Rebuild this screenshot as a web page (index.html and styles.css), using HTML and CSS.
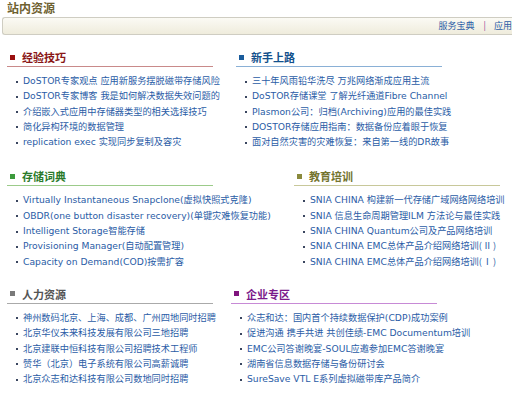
FILE: index.html
```html
<!DOCTYPE html>
<html lang="zh-CN">
<head>
  <meta charset="UTF-8" />
  <title>站内资源</title>
  <link rel="stylesheet" href="styles.css">
</head>
<body>

  <div class="title">站内资源</div>

  <div class="bar">
    <a href="#">服务宝典</a><span class="sep">|</span><a href="#">应用</a>
  </div>

  <div class="row first">
    <div class="box red">
      <h3>经验技巧</h3>
      <ul>
        <li><a href="#">DoSTOR专家观点 应用新服务摆脱磁带存储风险</a></li>
        <li><a href="#">DoSTOR专家博客 我是如何解决数据失效问题的</a></li>
        <li><a href="#">介绍嵌入式应用中存储器类型的相关选择技巧</a></li>
        <li><a href="#">简化异构环境的数据管理</a></li>
        <li><a href="#">replication exec 实现同步复制及容灾</a></li>
      </ul>
    </div>
    <div class="box blue shift-a">
      <h3>新手上路</h3>
      <ul>
        <li><a href="#">三十年风雨铅华洗尽 万兆网络渐成应用主流</a></li>
        <li><a href="#">DoSTOR存储课堂 了解光纤通道Fibre Channel</a></li>
        <li><a href="#">Plasmon公司：归档(Archiving)应用的最佳实践</a></li>
        <li><a href="#">DOSTOR存储应用指南：数据备份应着眼于恢复</a></li>
        <li><a href="#">面对自然灾害的灾难恢复：来自第一线的DR故事</a></li>
      </ul>
    </div>
  </div>

  <div class="row second">
    <div class="box green">
      <h3>存储词典</h3>
      <ul>
        <li><a href="#">Virtually Instantaneous Snapclone(虚拟快照式克隆)</a></li>
        <li><a href="#">OBDR(one button disaster recovery)(单键灾难恢复功能)</a></li>
        <li><a href="#">Intelligent Storage智能存储</a></li>
        <li><a href="#">Provisioning Manager(自动配置管理)</a></li>
        <li><a href="#">Capacity on Demand(COD)按需扩容</a></li>
      </ul>
    </div>
    <div class="box olive shift-b">
      <h3>教育培训</h3>
      <ul>
        <li><a href="#">SNIA CHINA 构建新一代存储广域网络网络培训</a></li>
        <li><a href="#">SNIA 信息生命周期管理ILM 方法论与最佳实践</a></li>
        <li><a href="#">SNIA CHINA Quantum公司及产品网络培训</a></li>
        <li><a href="#">SNIA CHINA EMC总体产品介绍网络培训<span class="cjk">(Ⅱ)</span></a></li>
        <li><a href="#">SNIA CHINA EMC总体产品介绍网络培训<span class="cjk">(Ⅰ)</span></a></li>
      </ul>
    </div>
  </div>

  <div class="row third">
    <div class="box gray">
      <h3>人力资源</h3>
      <ul>
        <li><a href="#">神州数码北京、上海、成都、广州四地同时招聘</a></li>
        <li><a href="#">北京华仪未来科技发展有限公司三地招聘</a></li>
        <li><a href="#">北京建联中恒科技有限公司招聘技术工程师</a></li>
        <li><a href="#">赞华（北京）电子系统有限公司高薪诚聘</a></li>
        <li><a href="#">北京众志和达科技有限公司数地同时招聘</a></li>
      </ul>
    </div>
    <div class="box purple shift-c">
      <h3>企业专区</h3>
      <ul>
        <li><a href="#">众志和达：国内首个持续数据保护(CDP)成功案例</a></li>
        <li><a href="#">促进沟通 携手共进 共创佳绩-EMC Documentum培训</a></li>
        <li><a href="#">EMC公司答谢晚宴-SOUL应邀参加EMC答谢晚宴</a></li>
        <li><a href="#">湖南省信息数据存储与备份研讨会</a></li>
        <li><a href="#">SureSave VTL E系列虚拟磁带库产品简介</a></li>
      </ul>
    </div>
  </div>

</body>
</html>
```

FILE: styles.css
```css
html,
body {
  overflow: hidden;
}

body {
  margin: 0;
  padding: 0;
  width: 512px;
  height: 393px;
  background: #fff;
  font-family: "DejaVu Sans", "Noto Sans CJK SC", sans-serif;
  font-size: 9.2px;
  color: #333;
}

a {
  color: #2a5ca6;
  text-decoration: none;
}

.cjk {
  font-family: "Noto Sans CJK SC", sans-serif;
  letter-spacing: 1px;
}

.title {
  padding-left: 7px;
  height: 16px;
  line-height: 16px;
  font-family: "Noto Sans CJK SC", sans-serif;
  font-size: 12px;
  font-weight: bold;
  color: #6e6130;
}

/* bar runs off the right edge in the original, so no right border */
.bar {
  margin: 1px 0 0 2px;
  width: 509px;
  height: 16px;
  line-height: 16px;
  padding-right: 0;
  box-sizing: content-box;
  text-align: right;
  border: 1px solid #cfcdc2;
  border-right: none;
  border-radius: 3px 0 0 3px;
  background: linear-gradient(#fbfaf4, #efecdc);
  white-space: nowrap;
  font-family: "Noto Sans CJK SC", sans-serif;
  font-size: 9px;
}

.bar .sep {
  color: #9a3a9a;
  margin: 0 8px 0 9px;
}

.row {
  display: flex;
  padding-left: 7px;
}

.row.first {
  margin-top: 15px;
}

.row.second {
  margin-top: 20px;
}

.row.third {
  margin-top: 18px;
}

.box {
  flex: none;
  width: 206px;
}

.shift-a {
  margin-left: 23px;
}

.shift-b {
  margin-left: 81px;
}

.shift-c {
  margin-left: 18px;
}

.box h3 {
  margin: 0;
  display: flex;
  align-items: center;
  gap: 7px;
  padding: 0 0 2px 3px;
  height: 14px;
  line-height: 14px;
  font-family: "Noto Sans CJK SC", sans-serif;
  font-size: 11px;
  font-weight: bold;
  border-bottom: 1px solid;
  box-sizing: content-box;
}

.box h3::before {
  content: "";
  width: 5px;
  height: 5px;
  background: var(--mark);
}

.box ul {
  list-style: none;
  margin: 0;
  padding: 6px 0 0 9px;
  line-height: 15.3px;
  white-space: nowrap;
}

.box li::before {
  content: "";
  display: inline-block;
  width: 2px;
  height: 2px;
  margin-right: 5px;
  vertical-align: middle;
  background: #3a4660;
}

.red h3 {
  --mark: #9a1010;
  color: #8a1616;
  border-color: #c98a8a;
}

.blue h3 {
  --mark: #1a5c9c;
  color: #12508c;
  border-color: #8ab0d6;
}

.green h3 {
  --mark: #3c9a3c;
  color: #2a7a2a;
  border-color: #9ccb8a;
}

.olive h3 {
  --mark: #8a8a3c;
  color: #74742e;
  border-color: #c8c89a;
}

.gray h3 {
  --mark: #7a7a7a;
  color: #555;
  border-color: #aaa;
}

.purple h3 {
  --mark: #80147e;
  color: #7a1a8a;
  border-color: #c78ad6;
}
```
